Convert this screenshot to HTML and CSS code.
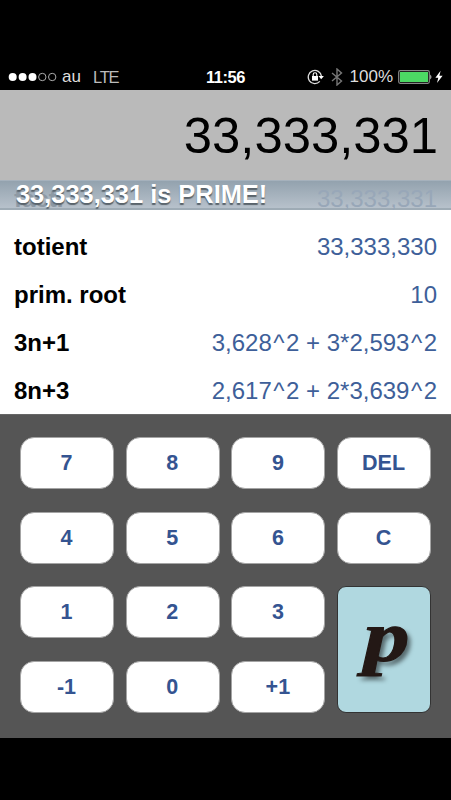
FILE: index.html
```html
<!DOCTYPE html>
<html lang="en">
<head>
<meta charset="utf-8">
<title>Prime calculator</title>
<link rel="stylesheet" href="styles.css">
</head>
<body>
<main class="phone">
  <header class="status">
    <div class="carrier">
      <svg class="signal" width="49" height="10" viewBox="0 0 49 10"><g fill="#fff"><circle cx="4.7" cy="5" r="4"/><circle cx="14.6" cy="5" r="4"/><circle cx="24.5" cy="5" r="4"/></g><g fill="none" stroke="#aaa"><circle cx="34.3" cy="5" r="3.7"/><circle cx="44.2" cy="5" r="3.7"/></g></svg>
      <span class="name">au</span><span class="network">LTE</span>
    </div>
    <time class="clock">11:56</time>
    <div class="indicators">
      <svg class="lock" width="18" height="16" viewBox="0 0 18 16"><path d="M12.8 12.4A6.6 6.6 0 1 1 14.4 7.2" fill="none" stroke="#ddd" stroke-width="1.3"/><path d="M11.5 7h5.4l-2.7 3.2z" fill="#fff"/><rect x="5" y="7" width="6" height="4.6" fill="#fff"/><path d="M6.2 7.2V5.6a1.8 1.8 0 0 1 3.6 0v1.6" fill="none" stroke="#fff" stroke-width="1.1"/></svg>
      <svg class="bluetooth" width="12" height="18" viewBox="0 0 12 18"><path d="M1 5l9.5 8L6 17V1l4.5 4L1 13" fill="none" stroke="#777" stroke-width="1.4"/></svg>
      <span class="percent">100%</span>
      <svg class="battery" width="36" height="14" viewBox="0 0 36 14"><rect x=".7" y=".7" width="30.6" height="12.6" rx="1.5" fill="none" stroke="#888" stroke-width="1.2"/><rect x="2" y="2" width="28" height="10" fill="#4cd964"/><path d="M32.3 4.5q2.2 2.5 0 5z" fill="#ddd"/></svg>
      <svg class="bolt" width="8" height="14" viewBox="0 0 8 14"><path d="M5.6.8L.4 7.8h2.9L2 13l5.6-7.3H4.4z" fill="#fff"/></svg>
    </div>
  </header>
  <output class="display">33,333,331</output>
  <section class="results">
    <div class="banner">
      <div class="under"><b>fact.</b><span>33,333,331</span></div>
      <h1 class="verdict">33,333,331 is PRIME!</h1>
    </div>
    <dl class="rows">
      <div class="row"><dt>totient</dt><dd>33,333,330</dd></div>
      <div class="row"><dt>prim. root</dt><dd>10</dd></div>
      <div class="row"><dt>3n+1</dt><dd>3,628<i>^</i>2 + 3*2,593<i>^</i>2</dd></div>
      <div class="row"><dt>8n+3</dt><dd>2,617<i>^</i>2 + 2*3,639<i>^</i>2</dd></div>
    </dl>
  </section>
  <section class="keypad">
    <button class="key">7</button><button class="key">8</button><button class="key">9</button><button class="key">DEL</button>
    <button class="key">4</button><button class="key">5</button><button class="key">6</button><button class="key">C</button>
    <button class="key">1</button><button class="key">2</button><button class="key">3</button><button class="key prime"><span class="glyph">p</span></button>
    <button class="key">-1</button><button class="key">0</button><button class="key">+1</button>
  </section>
</main>
</body>
</html>
```
FILE: styles.css
```css
* { box-sizing: border-box; }
body { margin: 0; background: #000; font-family: "Liberation Sans", Arial, sans-serif; }
.phone { width: 451px; height: 800px; padding-top: 62px; overflow: hidden; background: #000; }
.status { display: grid; grid-template-columns: 1fr auto 1fr; align-items: center; height: 28px; padding: 1px 8px 0; color: #fff; font-size: 17px; line-height: 28px; }
.carrier, .indicators { display: flex; align-items: center; }
.signal { margin-right: 5px; }
.name { color: #ddd; }
.network { margin-left: 12px; color: #bbb; font-size: 16.5px; letter-spacing: -1.2px; }
.clock { font-weight: bold; font-size: 16.5px; letter-spacing: -.5px; }
.indicators { justify-content: flex-end; }
.bluetooth { margin: 0 7px 0 6px; }
.percent { margin-right: 5px; color: #ddd; }
.bolt { margin: 0 0 0 1px; }
.display { display: block; height: 90px; padding-right: 13px; background: #bababa; color: #000; font-size: 50.8px; line-height: 92px; text-align: right; }
.results { height: 234px; background: #fff; }
.banner { display: grid; height: 30px; background: linear-gradient(#93a2ae, #b7c1cb); border-top: 1px solid #a5b1bc; border-bottom: 2px solid #9eabb5; }
.under, .verdict { grid-area: 1 / 1; }
.under { display: flex; justify-content: space-between; height: 29px; padding: 0 14px; overflow: hidden; color: #98a7b8; font-size: 24px; line-height: 36px; }
.under b { color: #8d99a4; }
.verdict { margin: 0; padding-left: 16px; color: #fff; font-size: 25.4px; line-height: 26px; text-shadow: 0 2px 1px #59636b; }
.rows { margin: 0; padding: 13px 14px 0; }
.row { display: flex; justify-content: space-between; height: 48px; font-size: 24px; line-height: 48px; }
dt { font-weight: bold; color: #000; }
dd { margin: 0; color: #3e5f99; }
dd i { display: inline-block; width: 14.2px; font-style: normal; text-align: center; }
.keypad { display: grid; grid-template-columns: repeat(4, 94px); grid-template-rows: repeat(4, 52px); column-gap: 11.7px; row-gap: 22.7px; height: 324px; padding: 22px 0 0 20px; background: #555; border-top: 1px solid #666; }
.key { padding: 0 1px 0 0; border: 1px solid #a4a4a4; border-radius: 14px; background: #fff; color: #345491; font: bold 21.5px/48px "Liberation Sans", Arial, sans-serif; }
.prime { grid-area: 3 / 4 / 5 / 5; border-color: #333; border-radius: 9px; background: #b0d8e0; color: #231815; }
.glyph { display: block; font: italic bold 72px/90px "Liberation Serif", serif; -webkit-text-stroke: 1px #231815; text-shadow: 3px 4px 4px rgba(0, 0, 0, .5); transform: translate(3px, -13px) scaleX(1.28); }
```
